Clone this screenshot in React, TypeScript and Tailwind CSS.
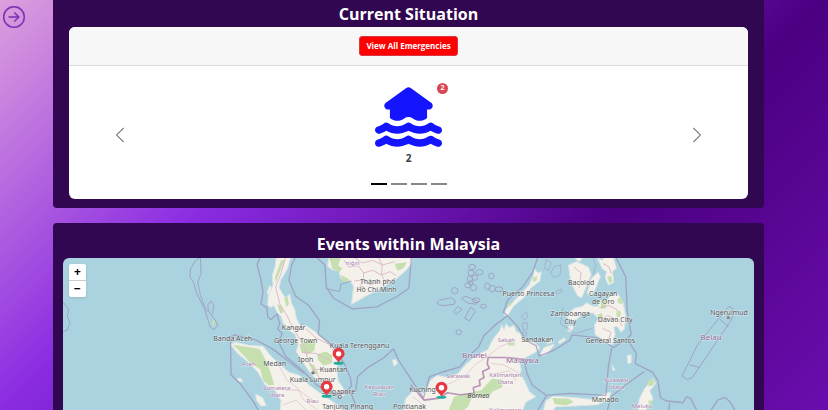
import { BsArrowRightCircle, BsChevronLeft, BsChevronRight } from "react-icons/bs";
import { FaHouseFloodWater } from "react-icons/fa6";

type Label = { x: number; y: number; text: string; kind?: "region" | "country" | "island" };

const labels: Label[] = [
  { x: 315, y: 26, text: "Thành phố" },
  { x: 314, y: 34, text: "Hồ Chí Minh" },
  { x: 290, y: 7, text: "nığın", kind: "region" },
  { x: 231, y: 72, text: "Kangar" },
  { x: 170, y: 83, text: "Banda Aceh" },
  { x: 233, y: 85, text: "George Town" },
  { x: 297, y: 90, text: "Kuala Terengganu" },
  { x: 243, y: 104, text: "Ipoh" },
  { x: 212, y: 108, text: "Medan" },
  { x: 186, y: 108, text: "Aceh", kind: "region" },
  { x: 271, y: 114, text: "Kuantan" },
  { x: 250, y: 124, text: "Kuala Lumpur" },
  { x: 276, y: 136, text: "Singapore" },
  { x: 214, y: 132, text: "Sumatera", kind: "region" },
  { x: 214, y: 139, text: "Utara", kind: "region" },
  { x: 250, y: 145, text: "Riau", kind: "region" },
  { x: 285, y: 151, text: "Tanjung Pinang" },
  { x: 317, y: 131, text: "Kepulauan", kind: "region" },
  { x: 317, y: 138, text: "Riau", kind: "region" },
  { x: 360, y: 134, text: "Kuching" },
  { x: 347, y: 151, text: "Pontianak" },
  { x: 466, y: 38, text: "Puerto Princesa" },
  { x: 519, y: 27, text: "Bacolod" },
  { x: 541, y: 38, text: "Cagayan" },
  { x: 541, y: 46, text: "de Oro" },
  { x: 508, y: 58, text: "Zamboanga" },
  { x: 508, y: 66, text: "City" },
  { x: 553, y: 64, text: "Davao City" },
  { x: 548, y: 85, text: "General Santos" },
  { x: 475, y: 84, text: "Sandakan" },
  { x: 444, y: 84, text: "Sabah", kind: "region" },
  { x: 412, y: 100, text: "Brunei", kind: "country" },
  { x: 460, y: 105, text: "Malaysia", kind: "country" },
  { x: 396, y: 120, text: "Sarawak", kind: "region" },
  { x: 443, y: 119, text: "Kalimantan", kind: "region" },
  { x: 443, y: 126, text: "Utara", kind: "region" },
  { x: 443, y: 154, text: "Kalimantan", kind: "region" },
  { x: 416, y: 140, text: "Borneo", kind: "island" },
  { x: 554, y: 124, text: "Sulawesi", kind: "region" },
  { x: 554, y: 131, text: "Utara", kind: "region" },
  { x: 543, y: 144, text: "Manado" },
  { x: 580, y: 150, text: "Maluku", kind: "region" },
  { x: 667, y: 57, text: "Ngerulmud" },
  { x: 649, y: 82, text: "Belau", kind: "country" },
];

const labelStyles = {
  city: "fill-[#505050] text-[7px]",
  region: "fill-[#a678a8] text-[6px]",
  country: "fill-[#8f6594] text-[8px]",
  island: "fill-[#333333] text-[7px] italic",
};

const pins = [
  { x: 276, y: 104 },
  { x: 264, y: 137 },
  { x: 379, y: 138 },
];

const reefs = [
  [818, 30, 10, 8], [815, 48, 9, 9], [840, 46, 11, 8], [812, 66, 8, 10], [826, 62, 9, 8],
  [806, 85, 10, 8], [822, 92, 10, 9], [814, 78, 7, 7], [876, 57, 8, 9], [864, 88, 8, 10],
  [879, 95, 9, 10], [899, 97, 12, 7], [766, 101, 10, 9], [778, 226, 8, 8],
  [830, 130, 12, 7], [852, 148, 9, 6],
];

function MapView() {
  return (
    <svg
      role="img"
      aria-label="Map of events within Malaysia"
      viewBox="0 0 692 153"
      preserveAspectRatio="xMidYMin slice"
      className="h-full w-full font-['Noto_Sans','Open_Sans',sans-serif]"
    >
      <g transform="scale(.3333) translate(411 -3)">
        {/* Land */}
        <g fill="#f4f1ec" stroke="#d9e4e4" strokeWidth="3" strokeLinejoin="round">
          <path d="M230 0 226 30 218 55 220 85 206 112 204 145 214 152 222 145 232 165 244 178 250 198 264 216 286 232 296 262 290 285 302 302 318 328 330 345 350 368 378 384 400 402 424 421 436 414 430 392 416 372 412 340 414 300 402 272 384 256 364 240 348 226 322 208 300 204 290 184 286 160 276 140 270 112 256 122 246 106 238 92 244 68 262 38 274 0Z" />
          <path d="M388 0 384 28 398 38 418 42 424 66 452 72 462 88 456 142 474 132 498 118 522 106 560 84 590 66 618 42 636 20 638 0Z" />
          <path d="M92 262 108 256 150 266 190 268 212 296 240 322 268 346 300 356 330 386 360 408 392 430 424 452 430 470 240 470 244 432 226 400 196 384 176 348 148 318 114 290Z" />
          <path d="M612 470 618 426 640 404 672 410 684 396 692 372 712 356 746 362 776 350 798 324 830 296 866 278 876 256 886 240 900 224 908 204 914 220 920 200 930 212 944 206 952 226 962 228 970 244 1004 256 1022 272 1016 282 984 300 960 310 966 340 962 352 976 372 990 404 1010 420 980 436 966 470Z" />
          <path d="M914 176 920 158 936 140 964 112 990 84 1002 58 1006 36 1016 48 1026 44 1022 72 996 92 974 122 944 146 926 174Z" />
          <path d="M1108 24 1132 14 1168 30 1176 54 1164 82 1148 122 1136 118 1118 84 1112 58Z" />
          <path d="M1128 0 1150 0 1142 14 1132 10Z" />
          <path d="M1176 66 1196 46 1204 58 1188 98 1174 118 1164 108Z" />
          <path d="M1196 4 1210 10 1216 0 1242 0 1252 34 1240 44 1244 76 1228 84 1218 62 1222 44 1208 34Z" />
          <path d="M1100 176 1126 154 1150 148 1162 138 1182 148 1198 148 1200 130 1218 134 1236 116 1256 110 1272 138 1280 180 1276 216 1266 226 1254 208 1244 210 1248 232 1240 262 1222 262 1206 244 1188 234 1186 204 1198 184 1182 168 1154 168 1134 186 1114 194Z" />
          <path d="M1108 208 1122 206 1120 222 1106 224Z" />
          <path d="M1024 290 1034 272 1052 266 1066 262 1048 286 1030 298ZM1076 256 1096 242 1098 250 1082 260ZM1042 262 1058 248 1064 254Z" />
          <path d="M1030 470 1040 432 1062 418 1122 422 1180 428 1218 410 1234 406 1230 428 1194 444 1124 448 1070 450 1054 470Z" />
          <path d="M1316 470 1320 428 1336 396 1362 364 1370 380 1352 402 1362 426 1346 448 1336 470Z" />
          <path d="M1284 296 1296 294 1296 318 1286 320ZM1240 324 1248 340 1240 340Z" />
          <path d="M168 412 188 422 200 446 184 448 170 430ZM578 310 590 308 594 320 584 328ZM112 366 122 364 130 374 118 374ZM210 86 216 92 208 116 202 108Z" />
        </g>

        {/* Forest */}
        <g fill="#c5dfb0">
          <path d="M100 264 130 268 180 276 198 310 212 344 224 384 208 386 190 370 182 338 150 316 126 290Z" />
          <path d="M300 262 330 252 348 258 344 282 322 294 304 284ZM352 292 380 284 398 296 396 320 372 326 356 310ZM326 316 344 326 356 350 344 352ZM244 10 256 8 240 46 228 78 226 60ZM368 376 388 370 398 384 384 394Z" />
          <path d="M388 0 424 2 416 26 428 34 420 46 398 34ZM586 20 622 16 612 34 594 42ZM424 54 448 66 440 78 426 70Z" />
          <path d="M846 400 878 366 910 368 908 392 880 404 866 422 818 422 806 450 780 470 744 470 764 420 808 408Z" />
          <path d="M924 256 946 256 946 266 928 266ZM1060 424 1108 426 1124 436 1100 446 1066 442ZM1184 430 1212 420 1206 432ZM1344 372 1364 366 1366 382 1350 390ZM1346 432 1362 432 1352 446Z" />
          <path d="M1204 132 1224 128 1220 154 1206 156ZM1256 124 1270 124 1270 142 1256 138ZM1224 60 1236 56 1240 74 1230 78ZM1000 64 1014 56 1012 70 1002 76ZM920 146 944 132 934 146ZM38 190 46 190 44 208 36 204Z" />
          <path d="M254 124 264 118 268 142 260 150ZM232 142 244 146 252 166 242 170ZM1194 174 1208 168 1212 182 1200 188ZM1252 160 1266 164 1262 182 1252 178Z" />
        </g>

        {/* Roads and inner borders */}
        <g fill="none" stroke="#dcbcc8" strokeWidth="3">
          <path d="M258 0 244 50 228 90 240 140 262 176 280 214 310 262 330 320 360 364 398 396 424 418" />
          <path d="M320 216 350 244 388 262 404 286M306 286 350 290 400 316M336 340 372 336 408 344" />
          <path d="M432 8 448 30 476 26 492 48 520 40 546 54 572 44 590 56M462 0 488 18 520 10 548 24 586 14M536 0 548 24 546 54 560 78M464 72 492 68 512 84 540 74M492 48 492 68 476 100" />
          <path d="M240 330 262 370 292 392 312 430 352 458M256 400 296 400 340 430M250 444 290 430 320 460" strokeWidth="2" />
          <path d="M714 396 760 376 802 352 832 320 866 298 900 270 940 254M876 320 914 324 960 350M880 352 930 342 950 372M640 420 674 446" strokeWidth="2" />
          <path d="M1124 30 1146 48 1140 92M1200 192 1226 176 1258 190 1270 208M1210 214 1236 226 1226 254M1200 152 1230 146 1256 160M1212 20 1230 30 1236 50" />
        </g>
        <g fill="none" stroke="#b795b5" strokeWidth="5" strokeLinejoin="round">
          <path d="M866 302 864 322 870 334 850 344 854 362 840 370 842 386 822 392 824 410 780 414 744 408 720 424 674 430 634 384M866 302 924 302 962 306 1002 312" />
          <path d="M284 214 300 212 308 200M376 384 408 414 440 404M814 296 830 300 840 290 850 304" strokeWidth="3" />
        </g>

        {/* Maritime borders */}
        <g fill="none" stroke="#9a8fb8" strokeWidth="4" strokeLinejoin="round" opacity=".7">
          <path d="M182 0 172 22 184 70 190 104 184 142 202 152 204 180 214 188 232 172 240 200 234 216 248 230 236 254 258 298 312 344 350 384 398 414 438 410 456 386 452 362 434 320 396 264 356 232 360 192 326 144 288 118 268 70 276 24 288 0" />
          <path d="M350 0 376 24 380 90 402 124 458 156 532 150 594 118 628 94 636 0" />
          <path d="M378 94 420 104 424 82 456 72" strokeWidth="3" />
          <path d="M2 0-14 12-28 36-30 60-18 78-10 108 14 156 32 212 44 218 54 204 44 186 26 162 20 162 2 116-6 74 4 50 2 0M26 162 24 144 34 132 42 146 38 170" strokeWidth="3" />
          <path d="M92 240 106 234 170 250 218 276 250 300 312 350M92 240 94 354 124 384 158 430 182 470" />
          <path d="M468 404 474 360 502 334 554 302 582 276 596 308 634 366 672 424 690 360 734 344 782 330 804 302 838 270 854 236 888 204 910 188 924 176 956 210 978 250 1010 266 1020 298 1064 280 1112 250 1118 234 1192 242 1244 272 1286 244 1296 232 1284 160 1280 60 1250 0" />
          <path d="M1016 0 1000 46 970 90 926 128 912 166 924 176M974 310 984 352 1000 386 1042 416 1110 410 1220 416 1228 326 1238 272M1286 250 1312 290 1308 320 1360 346 1376 370 1384 422 1400 432 1452 438 1462 420 1474 424 1498 470M1336 344 1280 384 1236 420 1222 470M1042 416 1010 470M440 404 456 412 470 450" />
          <path d="M1530 470 1556 430 1578 422 1592 434 1614 470M1412 438 1408 470" />
          <path d="M1590 148 1600 154 1604 172 1594 194 1480 362 1466 368 1448 358 1474 308 1494 266 1562 182ZM1472 324 1502 332M1562 186 1588 210" strokeWidth="3" />
          <path d="M-411 136-394 156-398 180-390 196-398 220-411 224" strokeWidth="3" />
          <path d="M712 138 720 130 754 122 768 132 764 142 734 146 720 144ZM786 124 800 118 836 134 830 142 804 138ZM762 164 776 148 788 158 770 172ZM796 184 808 162 814 150 828 164 810 192Z" strokeWidth="3" />
          {reefs.map(([cx, cy, rx, ry]) => (
            <ellipse key={`${cx}-${cy}`} cx={cx} cy={cy} rx={rx} ry={ry} strokeWidth="3" />
          ))}
          <path d="M980 164 986 180 974 188 966 178ZM970 198 984 198 984 216 972 222ZM966 228 982 226 980 240ZM1066 28 1086 24 1082 54 1064 62 1054 48ZM1040 8 1056 16 1048 40 1036 34ZM1068 104 1086 96 1090 102 1074 112ZM1092 150 1084 200 1130 230 1180 214M1180 0 1190 24 1182 54" strokeWidth="2" />
        </g>
        <circle cx="340" cy="348" r="5" fill="#777" />
        <circle cx="421" cy="420" r="5" fill="none" stroke="#777" strokeWidth="3" />
        <circle cx="1588" cy="182" r="5" fill="#888" />
      </g>

      {labels.map(({ x, y, text, kind = "city" }) => (
        <text
          key={`${x}-${y}`}
          x={x}
          y={y}
          textAnchor="middle"
          stroke="#ffffff"
          strokeOpacity=".6"
          strokeWidth="1"
          paintOrder="stroke"
          className={labelStyles[kind]}
        >
          {text}
        </text>
      ))}

      {pins.map(({ x, y }) => (
        <g key={`${x}-${y}`} transform={`translate(${x} ${y})`}>
          <ellipse cx="0" cy="1.500" rx="5" ry="1.500" fill="#1fae9b" />
          <path d="M0 1C-1-2-6-4.500-6-8A6 6 0 0 1 6-8C6-4.500 1-2 0 1Z" fill="#e5383f" />
          <circle cx="0" cy="-8" r="2.700" fill="#ffffff" />
        </g>
      ))}
    </svg>
  );
}

export default function App() {
  return (
    <div className="flex h-screen overflow-hidden bg-[linear-gradient(135deg,#dda0dd,#8a2be2,#4b0082,#6a0dad)] font-['Open_Sans','Noto_Sans',sans-serif]">
      <aside className="w-[53px] shrink-0 px-[3px] pt-[6px]">
        <button type="button" aria-label="Open menu" className="block text-[#7a35b5]">
          <BsArrowRightCircle size={22} strokeWidth={0.2} />
        </button>
      </aside>

      <main className="mr-16 flex min-w-0 flex-1 flex-col gap-[15px]">
        <section className="shrink-0 rounded-b bg-[#310751] px-4 pb-[9px]">
          <h2 className="flex h-[27px] items-center justify-center text-base font-bold text-white">
            Current Situation
          </h2>
          <div className="overflow-hidden rounded-md bg-white">
            <div className="flex justify-center border-b border-[#dcdcdc] bg-[#f7f7f7] py-[9px]">
              <button
                type="button"
                className="h-5 rounded-[3px] border border-[#dc3545] bg-[#ff0000] px-1.5 text-[8px] leading-none font-bold text-white"
              >
                View All Emergencies
              </button>
            </div>
            <div className="flex h-[133px] items-center justify-between px-[42px] text-[#808080]">
              <button type="button" aria-label="Previous" className="pt-1">
                <BsChevronLeft size={18} />
              </button>
              <div className="flex h-full flex-col items-center pt-[21px]">
                <div className="relative">
                  <FaHouseFloodWater size={67} color="#1414ff" className="h-[60px]" />
                  <span className="absolute -top-1 -right-[6px] flex size-[11px] items-center justify-center rounded-full bg-[#dc4555] text-[7px] font-bold text-white">
                    2
                  </span>
                </div>
                <p className="mt-[3px] text-[10px] leading-4 font-bold text-[#343a40]">2</p>
                <div className="mt-[17px] flex gap-1">
                  <button type="button" aria-label="Slide 1" className="h-0.5 w-4 bg-black" />
                  <button type="button" aria-label="Slide 2" className="h-0.5 w-4 bg-[#888888]" />
                  <button type="button" aria-label="Slide 3" className="h-0.5 w-4 bg-[#888888]" />
                  <button type="button" aria-label="Slide 4" className="h-0.5 w-4 bg-[#888888]" />
                </div>
              </div>
              <button type="button" aria-label="Next" className="pt-1">
                <BsChevronRight size={18} />
              </button>
            </div>
          </div>
        </section>

        <section className="flex min-h-0 flex-1 flex-col rounded-t bg-[#310751] px-[10px] pt-[7px]">
          <h2 className="mb-px flex h-[27px] shrink-0 items-center justify-center text-base font-bold text-white">
            Events within Malaysia
          </h2>
          <div className="relative min-h-0 flex-1 overflow-hidden rounded-t-md bg-[#aad3df]">
            <MapView />
            <div className="absolute top-[6px] left-[6px] flex w-[17px] flex-col overflow-hidden rounded-xs bg-white text-xs font-bold text-black shadow">
              <button type="button" aria-label="Zoom in" className="h-[17px] border-b border-[#cccccc] leading-none">
                +
              </button>
              <button type="button" aria-label="Zoom out" className="h-4 leading-none">
                −
              </button>
            </div>
          </div>
        </section>
      </main>
    </div>
  );
}
